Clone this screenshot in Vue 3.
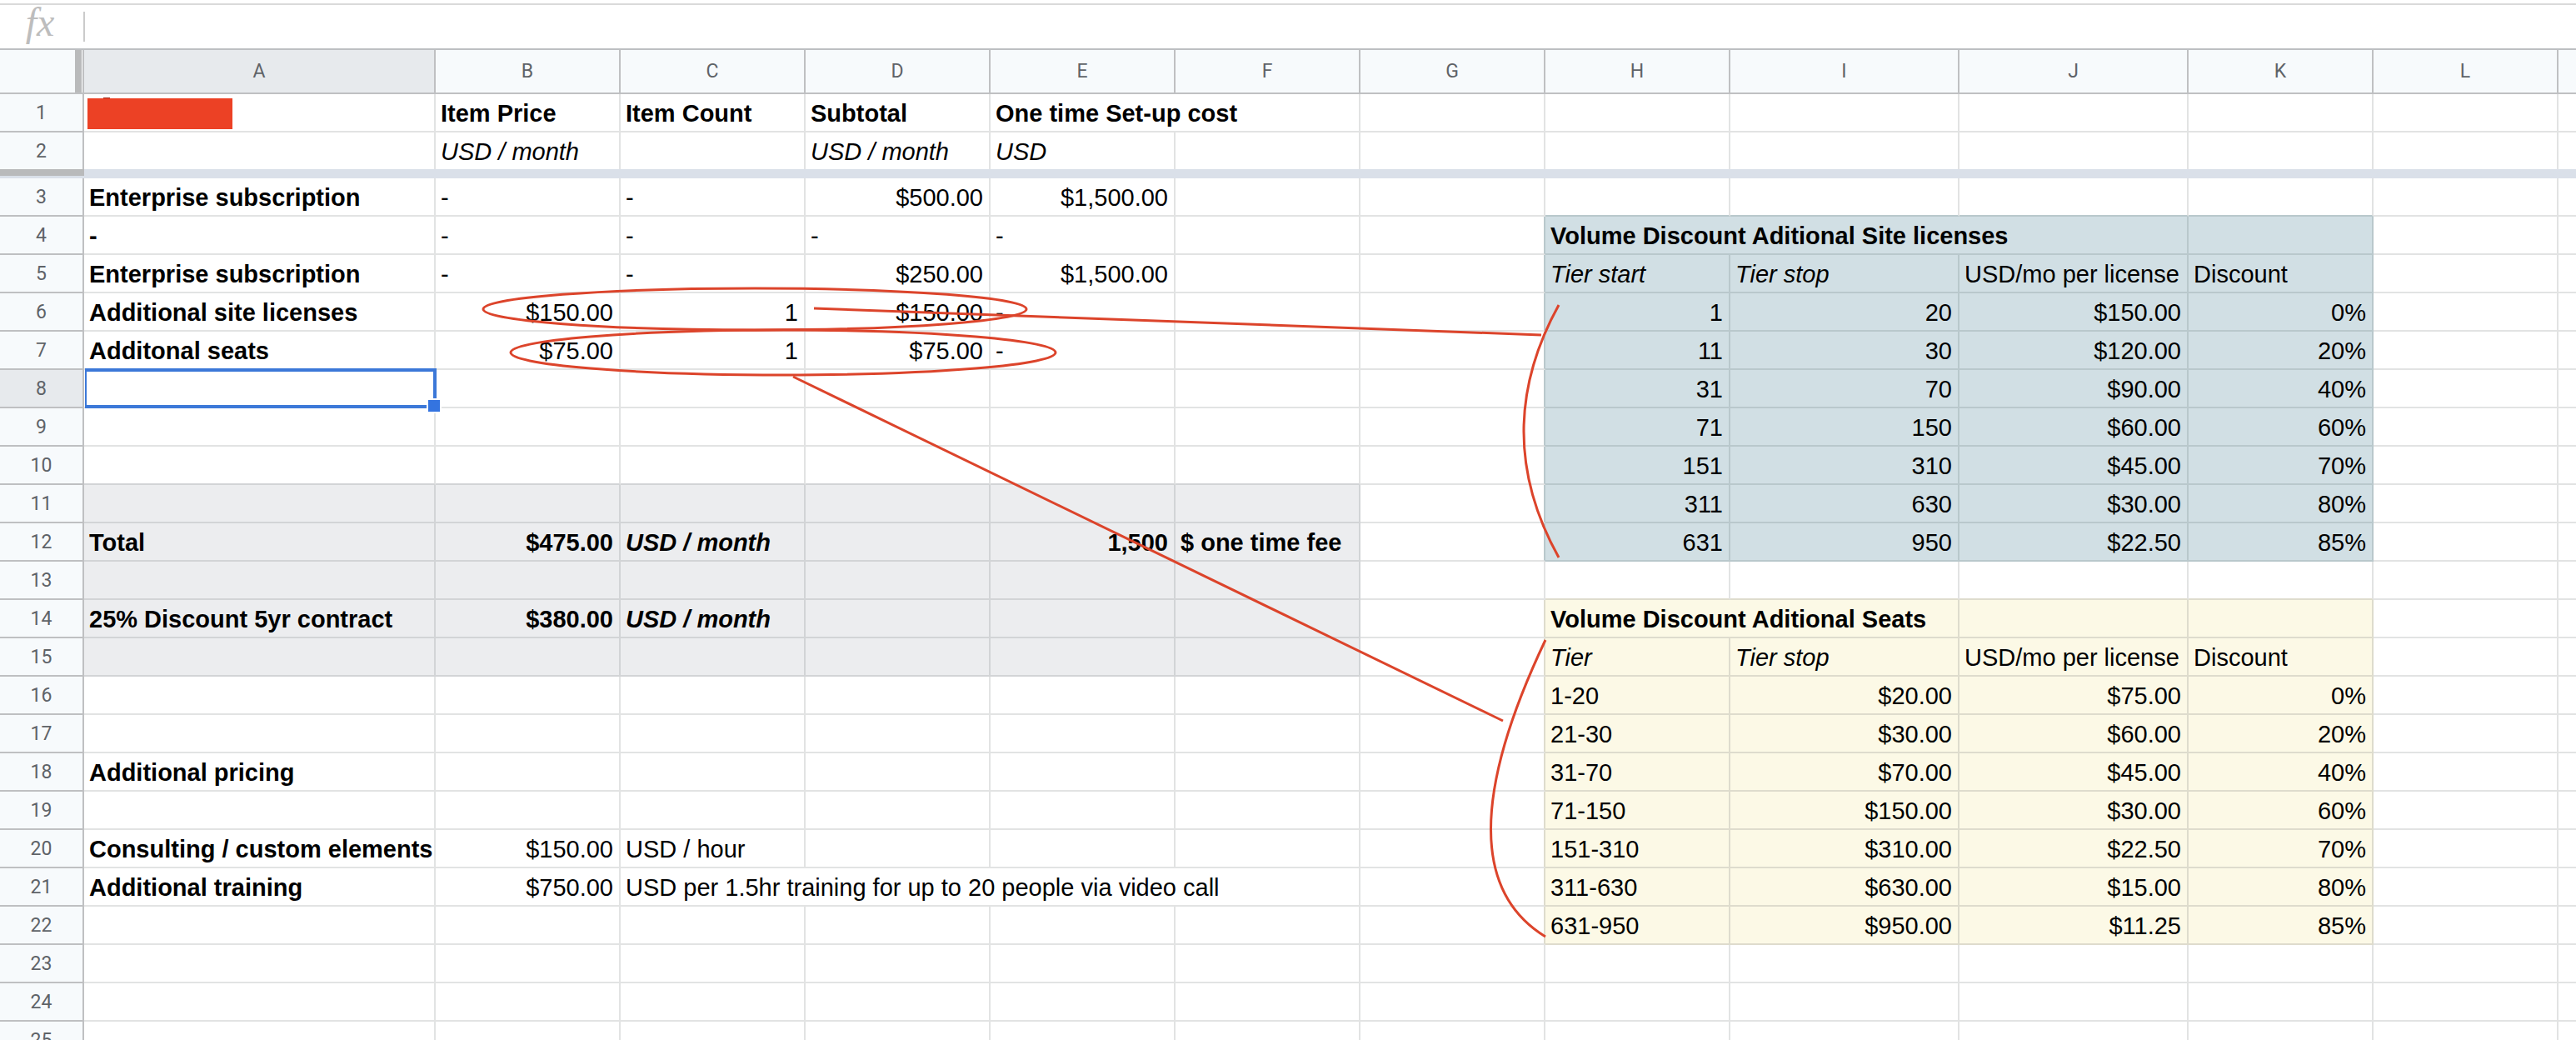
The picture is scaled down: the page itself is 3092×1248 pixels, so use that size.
<script setup>
const columns = ['A', 'B', 'C', 'D', 'E', 'F', 'G', 'H', 'I', 'J', 'K', 'L', '']
const columnClass = { A: 'wide', I: 'medium', J: 'medium', '': 'rest' }

// Each entry: [text, style flags, columns covered]; b = bold, i = italic, r = right aligned
const content = {
  B1: ['Item Price', 'b'],
  C1: ['Item Count', 'b'],
  D1: ['Subtotal', 'b'],
  E1: ['One time Set-up cost', 'b', 2],
  B2: ['USD / month', 'i'],
  D2: ['USD / month', 'i'],
  E2: ['USD', 'i'],
  A3: ['Enterprise subscription', 'b'],
  B3: ['-', ''],
  C3: ['-', ''],
  D3: ['$500.00', 'r'],
  E3: ['$1,500.00', 'r'],
  A4: ['-', 'b'],
  B4: ['-', ''],
  C4: ['-', ''],
  D4: ['-', ''],
  E4: ['-', ''],
  A5: ['Enterprise subscription', 'b'],
  B5: ['-', ''],
  C5: ['-', ''],
  D5: ['$250.00', 'r'],
  E5: ['$1,500.00', 'r'],
  A6: ['Additional site licenses', 'b'],
  B6: ['$150.00', 'r'],
  C6: ['1', 'r'],
  D6: ['$150.00', 'r'],
  E6: ['-', ''],
  A7: ['Additonal seats', 'b'],
  B7: ['$75.00', 'r'],
  C7: ['1', 'r'],
  D7: ['$75.00', 'r'],
  E7: ['-', ''],
  A12: ['Total', 'b'],
  B12: ['$475.00', 'br'],
  C12: ['USD / month', 'bi'],
  E12: ['1,500', 'br'],
  F12: ['$ one time fee', 'b'],
  A14: ['25% Discount 5yr contract', 'b'],
  B14: ['$380.00', 'br'],
  C14: ['USD / month', 'bi'],
  A18: ['Additional pricing', 'b'],
  A20: ['Consulting / custom elements', 'b'],
  B20: ['$150.00', 'r'],
  C20: ['USD / hour', ''],
  A21: ['Additional training', 'b'],
  B21: ['$750.00', 'r'],
  C21: ['USD per 1.5hr training for up to 20 people via video call', '', 4],
  H4: ['Volume Discount Aditional Site licenses', 'b', 3],
  H5: ['Tier start', 'i'],
  I5: ['Tier stop', 'i'],
  J5: ['USD/mo per license', ''],
  K5: ['Discount', ''],
  H14: ['Volume Discount Aditional Seats', 'b', 2],
  H15: ['Tier', 'i'],
  I15: ['Tier stop', 'i'],
  J15: ['USD/mo per license', ''],
  K15: ['Discount', ''],
}

const siteTiers = [
  ['1', '20', '$150.00', '0%'],
  ['11', '30', '$120.00', '20%'],
  ['31', '70', '$90.00', '40%'],
  ['71', '150', '$60.00', '60%'],
  ['151', '310', '$45.00', '70%'],
  ['311', '630', '$30.00', '80%'],
  ['631', '950', '$22.50', '85%'],
]
const seatTiers = [
  ['1-20', '$20.00', '$75.00', '0%'],
  ['21-30', '$30.00', '$60.00', '20%'],
  ['31-70', '$70.00', '$45.00', '40%'],
  ['71-150', '$150.00', '$30.00', '60%'],
  ['151-310', '$310.00', '$22.50', '70%'],
  ['311-630', '$630.00', '$15.00', '80%'],
  ['631-950', '$950.00', '$11.25', '85%'],
]
siteTiers.forEach((tier, n) =>
  tier.forEach((text, c) => (content['HIJK'[c] + (6 + n)] = [text, 'r']))
)
seatTiers.forEach((tier, n) =>
  tier.forEach((text, c) => (content['HIJK'[c] + (16 + n)] = [text, c ? 'r' : '']))
)

function shade(c, r) {
  if (c >= 0 && c <= 5 && r >= 11 && r <= 15) return 'grey'
  if (c >= 7 && c <= 10 && r >= 4 && r <= 12) return 'blue'
  if (c >= 7 && c <= 10 && r >= 14 && r <= 22) return 'cream'
  return ''
}

function buildRow(r) {
  const cells = []
  for (let c = 0; c < columns.length; ) {
    const [text, flags, span] = content[columns[c] + r] || ['', '', 1]
    const width = span || 1
    const own = shade(c, r)
    const right = own || shade(c + width, r)
    const bottom = own || shade(c, r + 1)
    cells.push({
      key: columns[c] + r,
      text,
      span: width,
      classes: [
        own && 'fill-' + own,
        right && 'right-' + right,
        bottom && 'bottom-' + bottom,
        flags.includes('b') && 'bold',
        flags.includes('i') && 'italic',
        flags.includes('r') && 'number',
      ],
    })
    c += width
  }
  return { number: r, cells }
}

const frozenRows = [1, 2].map(buildRow)
const rows = Array.from({ length: 23 }, (_, n) => buildRow(n + 3))
</script>

<template>
  <div class="app">
    <div class="formula-bar">
      <label class="fx" for="formula">fx</label>
      <input id="formula" class="formula" type="text" />
    </div>

    <table class="sheet">
      <colgroup>
        <col class="gutter" />
        <col v-for="name in columns" :key="name" :class="columnClass[name] || 'normal'" />
      </colgroup>
      <thead>
        <tr class="letters">
          <td class="corner"></td>
          <th v-for="name in columns" :key="name" scope="col" :class="{ active: name === 'A' }">
            {{ name }}
          </th>
        </tr>
        <tr v-for="row in frozenRows" :key="row.number" :class="'frozen-' + row.number">
          <th scope="row" class="row-number">{{ row.number }}</th>
          <td v-for="cell in row.cells" :key="cell.key" :colspan="cell.span" :class="cell.classes">
            <span v-if="cell.key === 'A1'" class="redaction"></span>
            <template v-else>{{ cell.text }}</template>
          </td>
        </tr>
        <tr class="freeze">
          <td class="freeze-handle"></td>
          <td :colspan="columns.length"></td>
        </tr>
      </thead>
      <tbody>
        <tr v-for="row in rows" :key="row.number">
          <th scope="row" class="row-number" :class="{ active: row.number === 8 }">{{ row.number }}</th>
          <td v-for="cell in row.cells" :key="cell.key" :colspan="cell.span" :class="cell.classes">
            {{ cell.text }}
            <div v-if="cell.key === 'A8'" class="selection"><i class="fill-handle"></i></div>
          </td>
        </tr>
      </tbody>
    </table>

    <svg class="annotations" aria-hidden="true">
      <ellipse cx="906" cy="371" rx="326" ry="25" />
      <ellipse cx="940" cy="423" rx="327" ry="27" />
      <path d="M977 370 L1850 402" />
      <path d="M952 452 L1804 865" />
      <path d="M1871 366 Q1787 518 1871 669" />
      <path d="M1855 768 Q1724 1044 1855 1124" />
    </svg>
  </div>
</template>

<style>
body {
  margin: 0;
  background: #fff;
}
</style>

<style scoped>
.app {
  position: relative;
  height: 100vh;
  overflow: hidden;
  box-sizing: border-box;
  padding-top: 4px;
  background: #fff;
  font-family: "Liberation Sans", Arial, sans-serif;
  font-size: 29px;
  color: #000;
}

.formula-bar {
  display: flex;
  align-items: flex-start;
  height: 52px;
  border-top: 2px solid #dadada;
  border-bottom: 2px solid #bdbfc2;
}
.fx {
  width: 100px;
  padding-right: 4px;
  box-sizing: border-box;
  text-align: center;
  font: italic 48px/42px "Liberation Serif", "Times New Roman", serif;
  color: #bdbdbd;
}
.formula {
  flex: 1;
  height: 36px;
  margin: 8px 0;
  padding: 0 12px;
  border: 0;
  border-left: 2px solid #cbcbcb;
  outline: 0;
  background: transparent;
  font: inherit;
}

.sheet {
  width: 100%;
  table-layout: fixed;
  border-collapse: separate;
  border-spacing: 0;
}
.gutter { width: 101px; }
.wide { width: 422px; }
.normal { width: 222px; }
.medium { width: 275px; }

th,
td {
  box-sizing: border-box;
  height: 46px;
  padding: 2px 7px 0 6px;
  border: 0 solid #e2e3e3;
  border-width: 0 2px 2px 0;
  line-height: 42px;
  text-align: left;
  font-weight: 400;
  white-space: nowrap;
}
tr > :last-child {
  border-right: 0;
}
.bold { font-weight: 700; }
.italic { font-style: italic; }
.number { text-align: right; }

.letters th,
.corner,
.row-number {
  padding: 2px 0 0;
  background: #f7fafc;
  border-color: #bfc0c2;
  text-align: center;
  font-family: Roboto, sans-serif;
  font-size: 23px;
  color: #5f6368;
}
.letters th,
.corner {
  height: 53px;
  padding: 0;
  line-height: 51px;
}
.letters th.active,
.row-number.active {
  background: #e7eaed;
}
.corner {
  background: linear-gradient(to left, #fff 1px, #b9babb 1px, #b9babb 9px, #f7fafc 9px);
}

.frozen-2 th,
.frozen-2 td {
  height: 44px;
  border-bottom: 0;
}
.freeze td {
  height: 11px;
  padding: 0;
  border: 0;
  background: #dae0e9;
}
.freeze .freeze-handle {
  background: linear-gradient(#b9babb 8px, #dae0e9 8px);
}

.fill-grey { background: #ecedef; }
.fill-blue { background: #d1dfe4; }
.fill-cream { background: #fcf9e6; }
.right-grey { border-right-color: #d2d4d6; }
.bottom-grey { border-bottom-color: #d2d4d6; }
.right-blue { border-right-color: #b9c8cc; }
.bottom-blue { border-bottom-color: #b9c8cc; }
.right-cream { border-right-color: #dedccd; }
.bottom-cream { border-bottom-color: #dedccd; }

.redaction {
  display: block;
  position: relative;
  width: 174px;
  height: 37px;
  margin-left: -2px;
  background: #ec4125;
}
.redaction::before {
  content: "";
  position: absolute;
  left: 19px;
  top: -1px;
  width: 8px;
  height: 1px;
  background: #9c2c1c;
}

td:has(.selection) {
  position: relative;
}
.selection {
  position: absolute;
  inset: -2px -3px -2px 1px;
  border: 4px solid #3c78d8;
  border-left-width: 2px;
}
.fill-handle {
  position: absolute;
  right: -10px;
  bottom: -10px;
  width: 14px;
  height: 14px;
  border: 2px solid #fff;
  background: #3474e0;
}

.annotations {
  position: absolute;
  inset: 0;
  width: 100%;
  height: 100%;
  pointer-events: none;
  fill: none;
  stroke: #dc442b;
  stroke-width: 3;
}
</style>
